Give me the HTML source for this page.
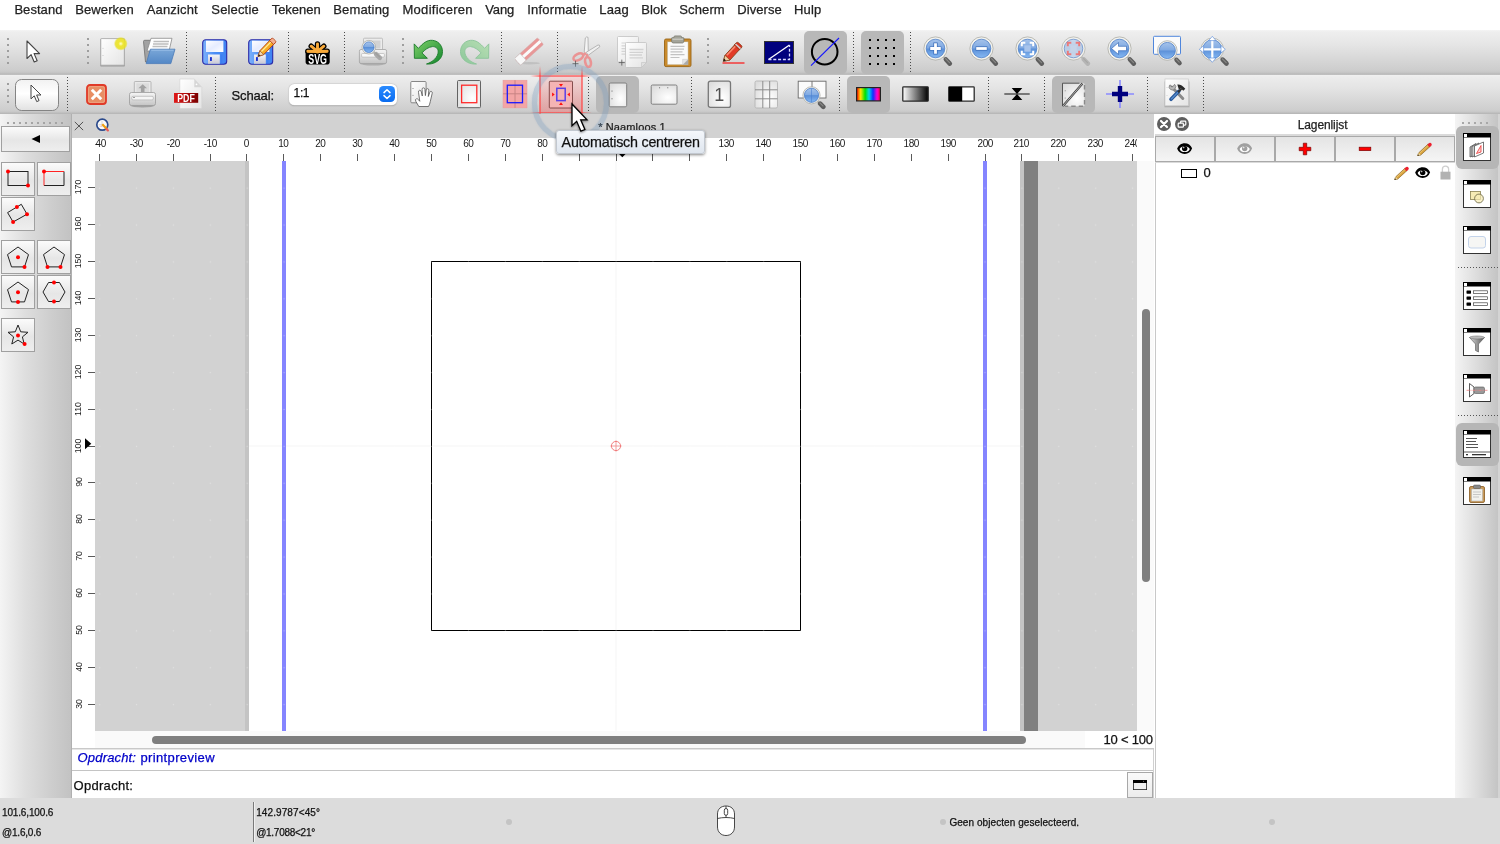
<!DOCTYPE html>
<html lang="nl">
<head>
<meta charset="utf-8">
<title>Naamloos 1 - QCAD</title>
<style>
*{box-sizing:border-box;margin:0;padding:0}
html,body{width:1500px;height:844px;overflow:hidden;background:#fff}
body{position:relative;font-family:"Liberation Sans",sans-serif;font-size:13px;color:#000;-webkit-text-stroke:0.250px currentColor}
#app{position:absolute;left:0;top:0;width:1500px;height:844px;overflow:hidden;will-change:transform}
#app div,#app span,#app svg{position:absolute}
#menubar{left:0;top:0;width:1500px;height:30px;background:#fff}
#tb1{left:0;top:30px;width:1500px;height:45px;background:linear-gradient(#f4f4f4 0,#eeeeee 2px,#e6e6e6 14px,#cdcdcd 40px,#c8c8c8 42px,#b9b9b9 44px,#c4c4c4 45px)}
#tb2{left:0;top:75px;width:1500px;height:39px;background:linear-gradient(#f0f0f0 0,#ececec 2px,#e4e4e4 13px,#cecece 35px,#c9c9c9 36.500px,#b8b8b8 38.500px,#b8b8b8 39px)}
.vsep{width:0;border-left:1px dotted #444}
.hsep{height:0;border-top:1px dotted #444}
.pressed{background:#b8b8b8;border-radius:5px}
#left{left:0;top:114px;width:72px;height:684px;background:linear-gradient(90deg,#f4f4f4,#dedede 35%,#cecece 70%,#c2c2c2)}
.tbtn{width:34px;height:34px;border:1px solid #a0a0a0;background:linear-gradient(#fbfbfb,#e6e6e6 55%,#eeeeee)}
#tabbar{left:72px;top:114px;width:1082px;height:24px;background:#d2d2d2}
#hruler{left:72px;top:138px;width:1082px;height:23px;background:#fff}
#hrclip{left:23px;top:0;width:1042px;height:23px;overflow:hidden}
#vruler{left:72px;top:161px;width:23px;height:588px;background:#fff;overflow:hidden}
#canvas{left:95px;top:161px;width:1042px;height:570px;background:#d2d2d2;overflow:hidden}
#vscroll{left:1137px;top:161px;width:17px;height:570px;background:#fafafa}
#hscroll{left:95px;top:731px;width:990px;height:17px;background:#fafafa}
#status{left:0;top:797.500px;width:1500px;height:46.500px;background:#dcdcdc}
#right{left:1154px;top:114px;width:301px;height:684px;background:#fff}
#rtb{left:1455px;top:114px;width:45px;height:684px;background:linear-gradient(90deg,#f4f4f4,#dedede 45%,#c2c2c2)}
.lbtn{top:23px;width:60px;height:26px;border:1px solid #a6a6a6;background:linear-gradient(#fafafa,#e8e8e8 50%,#f0f0f0)}
.rl{font-size:10px;line-height:12px;color:#1a1a1a;white-space:nowrap;-webkit-text-stroke:0}
</style>
</head>
<body>
<div id="app">
<div id="menubar">
<span style="left:14.4px;top:1.3px;font-size:13px;line-height:17px;letter-spacing:0.05px;color:#222;white-space:nowrap;">Bestand</span>
<span style="left:75.3px;top:1.3px;font-size:13px;line-height:17px;letter-spacing:0.08px;color:#222;white-space:nowrap;">Bewerken</span>
<span style="left:146.7px;top:1.3px;font-size:13px;line-height:17px;letter-spacing:0.16px;color:#222;white-space:nowrap;">Aanzicht</span>
<span style="left:211.3px;top:1.3px;font-size:13px;line-height:17px;letter-spacing:0.16px;color:#222;white-space:nowrap;">Selectie</span>
<span style="left:271.7px;top:1.3px;font-size:13px;line-height:17px;letter-spacing:-0.03px;color:#222;white-space:nowrap;">Tekenen</span>
<span style="left:333.3px;top:1.3px;font-size:13px;line-height:17px;letter-spacing:0.15px;color:#222;white-space:nowrap;">Bemating</span>
<span style="left:402.5px;top:1.3px;font-size:13px;line-height:17px;letter-spacing:0.28px;color:#222;white-space:nowrap;">Modificeren</span>
<span style="left:485.3px;top:1.3px;font-size:13px;line-height:17px;letter-spacing:-0.13px;color:#222;white-space:nowrap;">Vang</span>
<span style="left:527.3px;top:1.3px;font-size:13px;line-height:17px;letter-spacing:0.18px;color:#222;white-space:nowrap;">Informatie</span>
<span style="left:599.3px;top:1.3px;font-size:13px;line-height:17px;letter-spacing:0.16px;color:#222;white-space:nowrap;">Laag</span>
<span style="left:641.3px;top:1.3px;font-size:13px;line-height:17px;letter-spacing:0.04px;color:#222;white-space:nowrap;">Blok</span>
<span style="left:679.3px;top:1.3px;font-size:13px;line-height:17px;letter-spacing:0.12px;color:#222;white-space:nowrap;">Scherm</span>
<span style="left:737.3px;top:1.3px;font-size:13px;line-height:17px;letter-spacing:0.06px;color:#222;white-space:nowrap;">Diverse</span>
<span style="left:794.0px;top:1.3px;font-size:13px;line-height:17px;letter-spacing:0.19px;color:#222;white-space:nowrap;">Hulp</span>
</div>
<svg width="0" height="0" style="left:0;top:0"><defs>
<linearGradient id="gLens" x1="0" y1="0" x2="0" y2="1"><stop offset="0" stop-color="#a6c3ea"/><stop offset="0.480" stop-color="#7fa9e2"/><stop offset="0.520" stop-color="#5b90d8"/><stop offset="1" stop-color="#86b9f3"/></linearGradient>
<linearGradient id="gLensD" x1="0" y1="0" x2="0" y2="1"><stop offset="0" stop-color="#c4d6ee"/><stop offset="0.500" stop-color="#b4c9e6"/><stop offset="1" stop-color="#c9daf0"/></linearGradient>
<linearGradient id="gPaper" x1="0" y1="0" x2="1" y2="1"><stop offset="0" stop-color="#ffffff"/><stop offset="1" stop-color="#e4e4e4"/></linearGradient>
<radialGradient id="gPage" cx="0.650" cy="0.650" r="0.800"><stop offset="0" stop-color="#ffffff"/><stop offset="1" stop-color="#dcdcdc"/></radialGradient>
<radialGradient id="gGlow" cx="0.500" cy="0.500" r="0.500"><stop offset="0" stop-color="#ffffd0"/><stop offset="0.350" stop-color="#efe632"/><stop offset="0.750" stop-color="#e8e020" stop-opacity="0.850"/><stop offset="1" stop-color="#e8e020" stop-opacity="0"/></radialGradient>
<linearGradient id="gBlueF" x1="0" y1="0" x2="0" y2="1"><stop offset="0" stop-color="#7aa7d8"/><stop offset="1" stop-color="#5488c6"/></linearGradient>
<linearGradient id="gDisk" x1="0" y1="0" x2="1" y2="0"><stop offset="0" stop-color="#7eb2fb"/><stop offset="0.500" stop-color="#4a8df6"/><stop offset="1" stop-color="#3f83f2"/></linearGradient>
<linearGradient id="gLabel" x1="0" y1="0" x2="1" y2="1"><stop offset="0" stop-color="#ffffff"/><stop offset="0.500" stop-color="#e6ecff"/><stop offset="1" stop-color="#ffffff"/></linearGradient>
<linearGradient id="gMetal" x1="0" y1="0" x2="0" y2="1"><stop offset="0" stop-color="#f4f4f8"/><stop offset="1" stop-color="#c8c8d4"/></linearGradient>
<linearGradient id="gGreen" x1="0" y1="0" x2="1" y2="1"><stop offset="0" stop-color="#7fd06a"/><stop offset="1" stop-color="#12862c"/></linearGradient>
<linearGradient id="gGreenD" x1="0" y1="0" x2="1" y2="1"><stop offset="0" stop-color="#b9dfb4"/><stop offset="1" stop-color="#8cc79a"/></linearGradient>
<linearGradient id="gPrn" x1="0" y1="0" x2="0" y2="1"><stop offset="0" stop-color="#f6f6f6"/><stop offset="1" stop-color="#c4c4c4"/></linearGradient>
<linearGradient id="gRain" x1="0" y1="0" x2="1" y2="0"><stop offset="0" stop-color="#ff0000"/><stop offset="0.170" stop-color="#ffe600"/><stop offset="0.360" stop-color="#00e000"/><stop offset="0.520" stop-color="#00d8e8"/><stop offset="0.690" stop-color="#1030ff"/><stop offset="0.860" stop-color="#ff00d0"/><stop offset="1" stop-color="#ff0030"/></linearGradient>
<linearGradient id="gGray" x1="0" y1="0" x2="1" y2="0"><stop offset="0" stop-color="#ffffff"/><stop offset="1" stop-color="#000000"/></linearGradient>
<linearGradient id="gPdf" x1="0" y1="0" x2="1" y2="0"><stop offset="0" stop-color="#e01818"/><stop offset="1" stop-color="#7a0000"/></linearGradient>
<linearGradient id="gPencil" x1="0" y1="0" x2="1" y2="1"><stop offset="0" stop-color="#ffd23a"/><stop offset="1" stop-color="#f08a10"/></linearGradient>
</defs></svg>
<div id="tb1"></div><div id="tb2"></div>
<div style="left:7px;top:38px;width:2px;height:2px;background:#9e9e9e"></div><div style="left:7px;top:44px;width:2px;height:2px;background:#9e9e9e"></div><div style="left:7px;top:50px;width:2px;height:2px;background:#9e9e9e"></div><div style="left:7px;top:56px;width:2px;height:2px;background:#9e9e9e"></div><div style="left:7px;top:62px;width:2px;height:2px;background:#9e9e9e"></div>
<div style="left:87px;top:38px;width:2px;height:2px;background:#9e9e9e"></div><div style="left:87px;top:44px;width:2px;height:2px;background:#9e9e9e"></div><div style="left:87px;top:50px;width:2px;height:2px;background:#9e9e9e"></div><div style="left:87px;top:56px;width:2px;height:2px;background:#9e9e9e"></div><div style="left:87px;top:62px;width:2px;height:2px;background:#9e9e9e"></div>
<div style="left:402px;top:38px;width:2px;height:2px;background:#9e9e9e"></div><div style="left:402px;top:44px;width:2px;height:2px;background:#9e9e9e"></div><div style="left:402px;top:50px;width:2px;height:2px;background:#9e9e9e"></div><div style="left:402px;top:56px;width:2px;height:2px;background:#9e9e9e"></div><div style="left:402px;top:62px;width:2px;height:2px;background:#9e9e9e"></div>
<div style="left:707px;top:38px;width:2px;height:2px;background:#9e9e9e"></div><div style="left:707px;top:44px;width:2px;height:2px;background:#9e9e9e"></div><div style="left:707px;top:50px;width:2px;height:2px;background:#9e9e9e"></div><div style="left:707px;top:56px;width:2px;height:2px;background:#9e9e9e"></div><div style="left:707px;top:62px;width:2px;height:2px;background:#9e9e9e"></div>
<div style="left:186.0px;top:32px;width:1px;height:41px;background:repeating-linear-gradient(#4a4a4a 0,#4a4a4a 1px,transparent 1px,transparent 3px)"></div>
<div style="left:288.0px;top:32px;width:1px;height:41px;background:repeating-linear-gradient(#4a4a4a 0,#4a4a4a 1px,transparent 1px,transparent 3px)"></div>
<div style="left:344.0px;top:32px;width:1px;height:41px;background:repeating-linear-gradient(#4a4a4a 0,#4a4a4a 1px,transparent 1px,transparent 3px)"></div>
<div style="left:501.0px;top:32px;width:1px;height:41px;background:repeating-linear-gradient(#4a4a4a 0,#4a4a4a 1px,transparent 1px,transparent 3px)"></div>
<div style="left:557.0px;top:32px;width:1px;height:41px;background:repeating-linear-gradient(#4a4a4a 0,#4a4a4a 1px,transparent 1px,transparent 3px)"></div>
<div style="left:853.0px;top:32px;width:1px;height:41px;background:repeating-linear-gradient(#4a4a4a 0,#4a4a4a 1px,transparent 1px,transparent 3px)"></div>
<div style="left:910.0px;top:32px;width:1px;height:41px;background:repeating-linear-gradient(#4a4a4a 0,#4a4a4a 1px,transparent 1px,transparent 3px)"></div>
<div class="pressed" style="left:804px;top:31px;width:43px;height:43px"></div>
<div class="pressed" style="left:861px;top:31px;width:43px;height:43px"></div>
<svg style="left:26.0px;top:40.3px;" width="16.84" height="25.32" viewBox="0 0 16.84 25.32"><path transform="translate(1,1) scale(1.06)" d="M0 0V16.500L3.900 12.900L6.800 19.800L9.600 18.600L6.700 11.900H11.900Z" fill="#fff" stroke="#444" stroke-width="1.03774" stroke-linejoin="round"/></svg>
<svg style="left:98.0px;top:36.0px;" width="30" height="33" viewBox="0 0 30 33"><rect x="2.300" y="2.400" width="24.500" height="28.200" rx="1.200" fill="#9a9a9a"/><rect x="2.800" y="2.600" width="23.500" height="26.600" rx="0.800" fill="url(#gPaper)" stroke="#a8a8a8" stroke-width="0.800"/><circle cx="5" cy="12.300" r="0.500" fill="#bbb"/><circle cx="5" cy="19.600" r="0.500" fill="#bbb"/><circle cx="22.800" cy="7.700" r="7" fill="url(#gGlow)"/></svg>
<svg style="left:141.0px;top:36.0px;" width="36" height="30" viewBox="0 0 36 30"><path d="M2.500 5.500Q2.500 4.300 3.700 4.300H9.500L11 6H24V26H4.500Z" fill="#a2a2a2" stroke="#6e6e6e" stroke-width="0.800"/><path d="M10 2.300H31L28 15H6Z" fill="#fff" stroke="#8a8a8a" stroke-width="0.800"/><path d="M12.500 5.500H28M12 8H27.500M11.500 10.500H26.500" stroke="#bdbdbd" stroke-width="1.600"/><path d="M9.400 13.200H34L29.800 27.600H5.200Z" fill="url(#gBlueF)" stroke="#4a7ab8" stroke-width="0.800"/><path d="M10.300 14.300H32.500" stroke="#9cc0e8" stroke-width="0.800"/></svg>
<svg style="left:201.5px;top:38.7px;" width="26" height="26.5" viewBox="0 0 26 26.5"><rect x="0.700" y="0.700" width="24" height="24.600" rx="3" fill="url(#gDisk)" stroke="#2a2aa8" stroke-width="1.100"/><rect x="4" y="1.700" width="17.400" height="11.300" fill="url(#gLabel)"/><rect x="6" y="15.500" width="11.800" height="9.300" fill="url(#gMetal)"/><rect x="8" y="18" width="1.900" height="4" rx="0.500" fill="#1a2fd0"/><rect x="18.800" y="15.500" width="1.400" height="9" fill="#3a78ee" opacity="0.600"/></svg>
<svg style="left:247.5px;top:38.7px;" width="26" height="26.5" viewBox="0 0 26 26.5"><rect x="0.700" y="0.700" width="24" height="24.600" rx="3" fill="url(#gDisk)" stroke="#2a2aa8" stroke-width="1.100"/><rect x="4" y="1.700" width="17.400" height="11.300" fill="url(#gLabel)"/><rect x="6" y="15.500" width="11.800" height="9.300" fill="url(#gMetal)"/><rect x="8" y="18" width="1.900" height="4" rx="0.500" fill="#1a2fd0"/><rect x="18.800" y="15.500" width="1.400" height="9" fill="#3a78ee" opacity="0.600"/></svg>
<svg style="left:257.2px;top:37.2px;" width="20" height="21" viewBox="0 0 20 21"><path d="M1 19.500L2.800 13.800L14.300 1.800L18.300 5.700L6.700 17.600Z" fill="url(#gPencil)" stroke="#b03a10" stroke-width="0.900" stroke-linejoin="round"/><path d="M4.500 14.500L15 3.800" stroke="#fff3a8" stroke-width="1.200" opacity="0.900"/><path d="M12.600 3.600L14.400 1.700Q15.300 0.800 16.300 1.700L18.400 3.700Q19.300 4.600 18.400 5.600L16.600 7.400Z" fill="#f4b090" stroke="#b03a10" stroke-width="0.800"/><path d="M1 19.500L2.800 13.800L6.700 17.600Z" fill="#f2d8b0" stroke="#8a4a20" stroke-width="0.600"/><path d="M1 19.500L1.800 17L3.500 18.700Z" fill="#222"/></svg>
<svg style="left:304.5px;top:39.5px;" width="25" height="25" viewBox="0 0 25 25"><path d="M12.500 11.500L12.5 3.9" stroke="#000" stroke-width="5.400" stroke-linecap="round"/><path d="M12.500 11.500L6.2 6.2" stroke="#000" stroke-width="5.400" stroke-linecap="round"/><path d="M12.500 11.500L18.8 6.2" stroke="#000" stroke-width="5.400" stroke-linecap="round"/><path d="M12.500 11.500L2.8 11.3" stroke="#000" stroke-width="5.400" stroke-linecap="round"/><path d="M12.500 11.500L22.2 11.3" stroke="#000" stroke-width="5.400" stroke-linecap="round"/><rect x="0.600" y="9.300" width="24.100" height="15.200" rx="2.800" fill="#000"/><path d="M12.500 11.500L12.5 3.9" stroke="#f9aa3a" stroke-width="2.900" stroke-linecap="round"/><path d="M12.500 11.500L6.2 6.2" stroke="#f9aa3a" stroke-width="2.900" stroke-linecap="round"/><path d="M12.500 11.500L18.8 6.2" stroke="#f9aa3a" stroke-width="2.900" stroke-linecap="round"/><path d="M12.500 11.500L2.8 11.3" stroke="#f9aa3a" stroke-width="2.900" stroke-linecap="round"/><path d="M12.500 11.500L22.2 11.3" stroke="#f9aa3a" stroke-width="2.900" stroke-linecap="round"/><rect x="2" y="10.600" width="21" height="1.900" rx="0.900" fill="#f9aa3a"/><circle cx="12.500" cy="10.800" r="2.600" fill="#f9aa3a"/><text x="12.650" y="23.700" style="font-family:'Liberation Sans',sans-serif" font-weight="bold" font-size="14.200" fill="#fff" text-anchor="middle" textLength="18.800" lengthAdjust="spacingAndGlyphs">SVG</text></svg>
<svg style="left:358.0px;top:36.0px;" width="31" height="31" viewBox="0 0 31 31"><ellipse cx="15" cy="27.500" rx="13" ry="2" fill="#8a8a8a" opacity="0.500"/><rect x="5.500" y="2.200" width="19" height="13" rx="1" fill="#ececec" stroke="#b4b4b4" stroke-width="0.800"/><rect x="13" y="4.500" width="9.500" height="8" fill="#d2d2d2"/><path d="M3 13.500H27Q28.600 13.500 28.600 15.200V26Q28.600 27.500 27 27.500H3Q1.400 27.500 1.400 26V15.200Q1.400 13.500 3 13.500Z" fill="url(#gPrn)" stroke="#a2a2a2" stroke-width="0.800"/><rect x="3.600" y="17.500" width="22.800" height="3.600" rx="1" fill="#f8f8f8" stroke="#b0b0b0" stroke-width="0.600"/><path d="M16.1 16.3L18.2 18.3" stroke="#b4b4b0" stroke-width="2.200" stroke-linecap="round"/><path d="M18.2 18.3L21.8 21.8" stroke="#a8a8a8" stroke-width="4.600" stroke-linecap="round"/><path d="M17.9 17.4L21.5 20.9" stroke="#9a9a96" stroke-width="1.200" stroke-linecap="round" opacity="0.700"/><circle cx="10.8" cy="11.2" r="6.8" fill="#f4f4f0" stroke="#a4a49c" stroke-width="0.700"/><circle cx="10.8" cy="11.2" r="5.3" fill="url(#gLens)" stroke="#3f74c4" stroke-width="0.700"/></svg>
<svg style="left:412.5px;top:38.5px;" width="31" height="27" viewBox="0 0 31 27"><path d="M1.200 4.900L1.400 19.300L14.400 19.300L9 13.900C12 10.500 15.500 8 19.500 7.600C23 7.400 25.400 9.800 25.200 13C25 18 20 23 13.500 25C20 25.600 26 22.500 28.500 17.500C30.300 13.500 29.800 8 26.100 4.300C22.500 0.800 16.500 0.300 12.300 3.100C9.800 4.700 7.500 7 5.400 9.400Z" fill="url(#gGreen)" stroke="#1b7a2a" stroke-width="0.900" stroke-linejoin="round"/></svg>
<svg style="left:458.5px;top:38.5px;" width="31" height="27" viewBox="0 0 31 27"><g transform="translate(31,0) scale(-1,1)"><path d="M1.200 4.900L1.400 19.300L14.400 19.300L9 13.900C12 10.500 15.500 8 19.500 7.600C23 7.400 25.400 9.800 25.200 13C25 18 20 23 13.500 25C20 25.600 26 22.500 28.500 17.500C30.300 13.500 29.800 8 26.100 4.300C22.500 0.800 16.500 0.300 12.300 3.100C9.800 4.700 7.500 7 5.400 9.400Z" fill="url(#gGreenD)" stroke="#8cc49a" stroke-width="0.900" stroke-linejoin="round"/></g></svg>
<svg style="left:515.0px;top:37.0px;" width="30" height="29" viewBox="0 0 30 29"><ellipse cx="14" cy="26.200" rx="11" ry="1.200" fill="#b0b0b0" opacity="0.550"/><g transform="rotate(-42 14 14.500)"><rect x="-1.500" y="10" width="31" height="9" rx="1.200" fill="#e89898" stroke="#d4a8a8" stroke-width="0.500"/><rect x="-1.500" y="13" width="31" height="3" fill="#fafafa"/><rect x="-1.500" y="10" width="7.500" height="9" rx="0.800" fill="#f8f8f8" stroke="#c4c4c4" stroke-width="0.600"/></g></svg>
<svg style="left:570.0px;top:35.0px;" width="32" height="33" viewBox="0 0 32 33"><path d="M14.200 17.500L15.300 3Q16.300 1.300 18 2.300L18.300 17.500L16.300 19.500Z" fill="#f4f4f4" stroke="#a8a8a8" stroke-width="0.800"/><path d="M16.200 17.300L28 10Q30 9.500 29.800 11.800L18.200 20.300Z" fill="#f0f0f0" stroke="#a8a8a8" stroke-width="0.800"/><g fill="none" stroke="#ea9494" stroke-width="2.600"><ellipse cx="8.300" cy="22" rx="5.300" ry="3" transform="rotate(-28 8.300 22)"/><ellipse cx="18" cy="27" rx="2.800" ry="5" transform="rotate(-12 18 27)"/></g><path d="M12.500 20.500L16 18M17 19V22.500" stroke="#ea9494" stroke-width="2.400"/><path d="M2.500 28.700H8.500M5.500 25.700V31.700" stroke="#555" stroke-width="0.800"/></svg>
<svg style="left:616.0px;top:35.0px;" width="33" height="34" viewBox="0 0 33 34"><path d="M2.5 1.5H21.5Q22.5 1.5 22.5 2.5V22L17.5 27H2.5Q1.5 27 1.5 26V2.5Q1.5 1.5 2.5 1.5Z" fill="url(#gPaper)" stroke="#c2c2c2" stroke-width="0.800"/><path d="M22.5 22L17.5 27L17.5 22Z" fill="#e0e0e0" stroke="#c2c2c2" stroke-width="0.600"/><path d="M5.500 8H10M5.500 10.800H10M5.500 13.600H10M5.500 16.400H10M5.500 19.200H10" stroke="#d4d4d4" stroke-width="1.200"/><path d="M10.5 7.5H29.5Q30.5 7.5 30.5 8.5V27.5L25.5 32.5H10.5Q9.5 32.5 9.5 31.5V8.5Q9.5 7.5 10.5 7.5Z" fill="url(#gPaper)" stroke="#c2c2c2" stroke-width="0.800"/><path d="M30.5 27.5L25.5 32.5L25.5 27.5Z" fill="#e0e0e0" stroke="#c2c2c2" stroke-width="0.600"/><path d="M13.500 14.500H27.500M13.500 17.300H27M13.500 20H26M13.500 22.800H27" stroke="#d2d2d2" stroke-width="1.300"/><path d="M2.800 27.600H8.800M5.800 24.600V30.600" stroke="#555" stroke-width="0.800"/></svg>
<svg style="left:663.0px;top:35.0px;" width="30" height="33" viewBox="0 0 30 33"><rect x="1.500" y="4" width="26.500" height="27.600" rx="1.500" fill="#c98a2c" stroke="#9a6414" stroke-width="0.900"/><rect x="4.300" y="6.800" width="20.800" height="23" fill="#fafafa" stroke="#b8a070" stroke-width="0.500"/><path d="M7.500 11.300H21.500M7.500 14.100H21M7.500 16.900H19.500M7.500 19.700H21.500M7.500 22.500H16.500" stroke="#c2c2c2" stroke-width="1.200"/><path d="M25.100 24.300L19.600 29.800H25.100Z" fill="#aaa"/><path d="M19.600 24.300H25.100L19.600 29.800Z" fill="#e6e6e6" stroke="#bbb" stroke-width="0.400"/><path d="M8.500 5V3.600Q8.500 2.600 9.600 2.600H11V1.800Q11 0.900 12 0.900H17.500Q18.500 0.900 18.500 1.800V2.600H20Q21 2.600 21 3.600V5Q21 8 19.500 8H10Q8.500 8 8.500 5Z" fill="#a4a49a" stroke="#76766c" stroke-width="0.700"/><rect x="9.500" y="3.600" width="10.500" height="1.300" fill="#c8c8c0"/></svg>
<svg style="left:720.5px;top:39.5px;" width="26" height="26" viewBox="0 0 26 26"><path d="M1.500 23H23.500" stroke="#f00" stroke-width="1.100"/><path d="M2.300 21.300L4 15.300L15.300 3L20.300 7.600L9 20Z" fill="#e23a26" stroke="#7a3a10" stroke-width="0.800" stroke-linejoin="round"/><path d="M5.800 15.300L16 4.500" stroke="#f88a70" stroke-width="1.600"/><path d="M13.300 5L15.300 2.800Q16.300 1.800 17.500 2.800L20.500 5.500Q21.500 6.500 20.500 7.600L18.500 9.800Z" fill="#d83020" stroke="#7a3a10" stroke-width="0.700"/><path d="M14.500 4L19.500 8.600" stroke="#d0d0d0" stroke-width="1.500"/><path d="M2.300 21.300L4 15.300L9 20Z" fill="#f0d0a0" stroke="#7a3a10" stroke-width="0.600"/><path d="M2.300 21.300L3.100 18.600L5 20.400Z" fill="#111"/></svg>
<svg style="left:764.0px;top:41.0px;" width="30" height="23" viewBox="0 0 30 23"><rect x="0.500" y="0.500" width="29" height="22" fill="#00007e" stroke="#333" stroke-width="1"/><path d="M4.500 18.500L25.500 4" stroke="#fff" stroke-width="1.300"/><path d="M4.500 18.500H25.500V4" fill="none" stroke="#d8d8ff" stroke-width="1.300" stroke-dasharray="3 1.800"/></svg>
<svg style="left:809.0px;top:36.0px;" width="32" height="32" viewBox="0 0 32 32"><circle cx="15.700" cy="15.700" r="12.800" fill="none" stroke="#000" stroke-width="2"/><path d="M2 29.600L30 2" stroke="#1414ff" stroke-width="1.100"/></svg>
<svg style="left:869.2px;top:39.2px;" width="26" height="26" viewBox="0 0 26 26"><rect x="0" y="0" width="2" height="2" fill="#000"/><rect x="0" y="8" width="2" height="2" fill="#000"/><rect x="0" y="16" width="2" height="2" fill="#000"/><rect x="0" y="24" width="2" height="2" fill="#000"/><rect x="8" y="0" width="2" height="2" fill="#000"/><rect x="8" y="8" width="2" height="2" fill="#000"/><rect x="8" y="16" width="2" height="2" fill="#000"/><rect x="8" y="24" width="2" height="2" fill="#000"/><rect x="16" y="0" width="2" height="2" fill="#000"/><rect x="16" y="8" width="2" height="2" fill="#000"/><rect x="16" y="16" width="2" height="2" fill="#000"/><rect x="16" y="24" width="2" height="2" fill="#000"/><rect x="24" y="0" width="2" height="2" fill="#000"/><rect x="24" y="8" width="2" height="2" fill="#000"/><rect x="24" y="16" width="2" height="2" fill="#000"/><rect x="24" y="24" width="2" height="2" fill="#000"/></svg>
<svg style="left:921.5px;top:34.5px;" width="32" height="33" viewBox="0 0 32 33"><path d="M21.8 22.3L23.9 24.5" stroke="#b4b4b0" stroke-width="2.200" stroke-linecap="round"/><path d="M23.9 24.5L27.8 28.6" stroke="#5e5e5e" stroke-width="4.600" stroke-linecap="round"/><path d="M23.6 23.6L27.5 27.7" stroke="#9a9a96" stroke-width="1.200" stroke-linecap="round" opacity="0.700"/><circle cx="13.5" cy="13.5" r="11.6" fill="#f3f3ee" stroke="#a4a49c" stroke-width="0.700"/><circle cx="13.5" cy="13.5" r="9.3" fill="url(#gLens)" stroke="#3f74c4" stroke-width="0.700"/><path d="M7.600 13.500H19.400M13.500 7.600V19.400" stroke="#3a6cb8" stroke-width="4.200"/><path d="M8.200 13.500H18.800M13.500 8.200V18.800" stroke="#fff" stroke-width="2.800"/></svg>
<svg style="left:967.5px;top:34.5px;" width="32" height="33" viewBox="0 0 32 33"><path d="M21.8 22.3L23.9 24.5" stroke="#b4b4b0" stroke-width="2.200" stroke-linecap="round"/><path d="M23.9 24.5L27.8 28.6" stroke="#5e5e5e" stroke-width="4.600" stroke-linecap="round"/><path d="M23.6 23.6L27.5 27.7" stroke="#9a9a96" stroke-width="1.200" stroke-linecap="round" opacity="0.700"/><circle cx="13.5" cy="13.5" r="11.6" fill="#f3f3ee" stroke="#a4a49c" stroke-width="0.700"/><circle cx="13.5" cy="13.5" r="9.3" fill="url(#gLens)" stroke="#3f74c4" stroke-width="0.700"/><path d="M7.600 13.500H19.400" stroke="#3a6cb8" stroke-width="4.200"/><path d="M8.200 13.500H18.800" stroke="#fff" stroke-width="2.800"/></svg>
<svg style="left:1013.5px;top:34.5px;" width="32" height="33" viewBox="0 0 32 33"><path d="M21.8 22.3L23.9 24.5" stroke="#b4b4b0" stroke-width="2.200" stroke-linecap="round"/><path d="M23.9 24.5L27.8 28.6" stroke="#5e5e5e" stroke-width="4.600" stroke-linecap="round"/><path d="M23.6 23.6L27.5 27.7" stroke="#9a9a96" stroke-width="1.200" stroke-linecap="round" opacity="0.700"/><circle cx="13.5" cy="13.5" r="11.6" fill="#f3f3ee" stroke="#a4a49c" stroke-width="0.700"/><circle cx="13.5" cy="13.5" r="9.3" fill="url(#gLens)" stroke="#3f74c4" stroke-width="0.700"/><rect x="10.300" y="10.300" width="6.400" height="6.400" fill="#a8c4ec"/><path d="M7.800 11.300V7.800H11.300M15.700 7.800H19.200V11.300M19.200 15.700V19.200H15.700M11.300 19.200H7.800V15.700" fill="none" stroke="#fff" stroke-width="2"/></svg>
<svg style="left:1059.5px;top:34.5px;" width="32" height="33" viewBox="0 0 32 33"><g opacity="0.850"><path d="M21.8 22.3L23.9 24.5" stroke="#b4b4b0" stroke-width="2.200" stroke-linecap="round"/><path d="M23.9 24.5L27.8 28.6" stroke="#b0b0b0" stroke-width="4.600" stroke-linecap="round"/><path d="M23.6 23.6L27.5 27.7" stroke="#9a9a96" stroke-width="1.200" stroke-linecap="round" opacity="0.700"/><circle cx="13.5" cy="13.5" r="11.6" fill="#f3f3ee" stroke="#a4a49c" stroke-width="0.700"/><circle cx="13.5" cy="13.5" r="9.3" fill="url(#gLensD)" stroke="#3f74c4" stroke-width="0.700"/><rect x="10.300" y="10.300" width="6.400" height="6.400" fill="#c2d2ea"/><path d="M7.800 11.300V7.800H11.300M15.700 7.800H19.200V11.300M19.200 15.700V19.200H15.700M11.300 19.200H7.800V15.700" fill="none" stroke="#ee6868" stroke-width="2"/></g></svg>
<svg style="left:1105.5px;top:34.5px;" width="32" height="33" viewBox="0 0 32 33"><path d="M21.8 22.3L23.9 24.5" stroke="#b4b4b0" stroke-width="2.200" stroke-linecap="round"/><path d="M23.9 24.5L27.8 28.6" stroke="#5e5e5e" stroke-width="4.600" stroke-linecap="round"/><path d="M23.6 23.6L27.5 27.7" stroke="#9a9a96" stroke-width="1.200" stroke-linecap="round" opacity="0.700"/><circle cx="13.5" cy="13.5" r="11.6" fill="#f3f3ee" stroke="#a4a49c" stroke-width="0.700"/><circle cx="13.5" cy="13.5" r="9.3" fill="url(#gLens)" stroke="#3f74c4" stroke-width="0.700"/><path d="M5.500 13.500L12.500 7.500V11.300H20.500V15.700H12.500V19.500Z" fill="#fff" stroke="#3a6cb8" stroke-width="0.700"/></svg>
<svg style="left:1152.0px;top:35.0px;" width="32" height="33" viewBox="0 0 32 33"><rect x="1.500" y="1.300" width="27" height="18" rx="1" fill="#fbfbfb" stroke="#4f86dc" stroke-width="1"/><path d="M22.5 22.9L24.6 25.0" stroke="#b4b4b0" stroke-width="2.200" stroke-linecap="round"/><path d="M24.6 25.0L27.5 28.0" stroke="#5e5e5e" stroke-width="4.600" stroke-linecap="round"/><path d="M24.3 24.1L27.2 27.1" stroke="#9a9a96" stroke-width="1.200" stroke-linecap="round" opacity="0.700"/><circle cx="15.3" cy="15.5" r="9.8" fill="#f3f3ee" stroke="#a4a49c" stroke-width="0.700"/><circle cx="15.3" cy="15.5" r="8.1" fill="url(#gLens)" stroke="#3f74c4" stroke-width="0.700"/></svg>
<svg style="left:1197.0px;top:34.0px;" width="36" height="35" viewBox="0 0 36 35"><path d="M23.6 23.6L25.7 25.7" stroke="#b4b4b0" stroke-width="2.200" stroke-linecap="round"/><path d="M25.7 25.7L29.5 29.5" stroke="#5e5e5e" stroke-width="4.600" stroke-linecap="round"/><path d="M25.4 24.8L29.2 28.6" stroke="#9a9a96" stroke-width="1.200" stroke-linecap="round" opacity="0.700"/><circle cx="15.3" cy="15.3" r="11.2" fill="#f3f3ee" stroke="#a4a49c" stroke-width="0.700"/><circle cx="15.3" cy="15.3" r="9.5" fill="url(#gLens)" stroke="#3f74c4" stroke-width="0.700"/><path d="M15.300 4V26.600M4 15.300H26.600" stroke="#fff" stroke-width="2.200"/><path d="M15.300 2.300L19 6.600H11.600Z M15.300 28.300L19 24H11.600Z M2.300 15.300L6.600 11.600V19Z M28.300 15.300L24 11.600V19Z" fill="#fff" stroke="#4f86dc" stroke-width="0.600"/></svg>
<div style="left:7px;top:83px;width:2px;height:2px;background:#9e9e9e"></div><div style="left:7px;top:89px;width:2px;height:2px;background:#9e9e9e"></div><div style="left:7px;top:95px;width:2px;height:2px;background:#9e9e9e"></div><div style="left:7px;top:101px;width:2px;height:2px;background:#9e9e9e"></div>
<div style="left:67.0px;top:77px;width:1px;height:35px;background:repeating-linear-gradient(#4a4a4a 0,#4a4a4a 1px,transparent 1px,transparent 3px)"></div>
<div style="left:215.0px;top:77px;width:1px;height:35px;background:repeating-linear-gradient(#4a4a4a 0,#4a4a4a 1px,transparent 1px,transparent 3px)"></div>
<div style="left:588.0px;top:77px;width:1px;height:35px;background:repeating-linear-gradient(#4a4a4a 0,#4a4a4a 1px,transparent 1px,transparent 3px)"></div>
<div style="left:691.0px;top:77px;width:1px;height:35px;background:repeating-linear-gradient(#4a4a4a 0,#4a4a4a 1px,transparent 1px,transparent 3px)"></div>
<div style="left:839.0px;top:77px;width:1px;height:35px;background:repeating-linear-gradient(#4a4a4a 0,#4a4a4a 1px,transparent 1px,transparent 3px)"></div>
<div style="left:988.0px;top:77px;width:1px;height:35px;background:repeating-linear-gradient(#4a4a4a 0,#4a4a4a 1px,transparent 1px,transparent 3px)"></div>
<div style="left:1044.0px;top:77px;width:1px;height:35px;background:repeating-linear-gradient(#4a4a4a 0,#4a4a4a 1px,transparent 1px,transparent 3px)"></div>
<div style="left:1147.0px;top:77px;width:1px;height:35px;background:repeating-linear-gradient(#4a4a4a 0,#4a4a4a 1px,transparent 1px,transparent 3px)"></div>
<div style="left:1203.0px;top:77px;width:1px;height:35px;background:repeating-linear-gradient(#4a4a4a 0,#4a4a4a 1px,transparent 1px,transparent 3px)"></div>
<div style="left:14.500px;top:78.500px;width:44px;height:32px;border:1.600px solid #848484;border-radius:6.500px;background:linear-gradient(#f2f2f2,#ffffff 45%,#e2e2e2)"></div>
<svg style="left:30.0px;top:84.2px;" width="13.76" height="20.48" viewBox="0 0 13.76 20.48"><path transform="translate(1,1) scale(0.84)" d="M0 0V16.500L3.900 12.900L6.800 19.800L9.600 18.600L6.700 11.900H11.900Z" fill="#fff" stroke="#444" stroke-width="1.19048" stroke-linejoin="round"/></svg>
<svg style="left:85.5px;top:83.5px;" width="21" height="21" viewBox="0 0 21 21"><rect x="1" y="1" width="19" height="19" rx="3" fill="#e88e64" stroke="#e03a28" stroke-width="1.800"/><rect x="2.600" y="2.600" width="15.800" height="15.800" rx="1.500" fill="none" stroke="#f0a888" stroke-width="0.800"/><path d="M5.800 5.800L15.200 15.200M15.200 5.800L5.800 15.200" stroke="#fff" stroke-width="3"/></svg>
<svg style="left:128.0px;top:79.5px;" width="29" height="28" viewBox="0 0 29 28"><ellipse cx="14.500" cy="25.800" rx="12" ry="1.600" fill="#808080" opacity="0.600"/><rect x="6.300" y="1.500" width="16.700" height="13" rx="0.800" fill="#e9e9e9" stroke="#ababab" stroke-width="0.800"/><rect x="8.300" y="3.300" width="12.700" height="9.500" fill="#dcdcdc"/><path d="M14.700 4.300L19 8.300H16.500V12H12.900V8.300H10.400Z" fill="#a2a2a2"/><path d="M3.500 12.500H25.500Q27.500 12.500 27.500 14.500V23.500Q27.500 25.500 25.500 25.500H3.500Q1.500 25.500 1.500 23.500V14.500Q1.500 12.500 3.500 12.500Z" fill="url(#gPrn)" stroke="#9a9a9a" stroke-width="0.800"/><rect x="3.800" y="16.300" width="21.500" height="3.600" rx="1.200" fill="#f6f6f6" stroke="#a6a6a6" stroke-width="0.600"/><rect x="5" y="17" width="2" height="0.800" fill="#888"/></svg>
<svg style="left:173.0px;top:78.0px;" width="30" height="32" viewBox="0 0 30 32"><path d="M6.800 1H21.300L28.800 9.300V30.600H6.800Z" fill="url(#gPaper)" stroke="#d0d0d0" stroke-width="0.600"/><path d="M21.300 1L28.800 9.300H21.300Z" fill="#d6d6d6"/><circle cx="23.500" cy="6.300" r="0.900" fill="#fff"/><rect x="1" y="15" width="24.200" height="9.800" fill="url(#gPdf)"/><text x="13" y="23.700" style="font-family:'Liberation Sans',sans-serif" font-weight="bold" font-size="10.300" fill="#fff" text-anchor="middle" textLength="17.600" lengthAdjust="spacingAndGlyphs">PDF</text></svg>
<span style="left:231.6px;top:86.5px;font-size:13px;line-height:17px;letter-spacing:-0.16px;color:#111;white-space:nowrap;">Schaal:</span>
<div style="left:288.500px;top:83.500px;width:108.500px;height:21px;border-radius:5.500px;background:#fff;box-shadow:0 0 0 0.500px #d0d0d0,0 0.500px 1.500px rgba(0,0,0,0.250)"></div>
<div style="left:379px;top:86px;width:16px;height:16px;border-radius:4.500px;background:linear-gradient(#2a8bff,#0a6cf0)"></div>
<svg style="left:379.0px;top:86.0px;" width="16" height="16" viewBox="0 0 16 16"><path d="M5 6.600L8 3.700L11 6.600M5 9.600L8 12.500L11 9.600" fill="none" stroke="#fff" stroke-width="1.500" stroke-linecap="round" stroke-linejoin="round"/></svg>
<span style="left:293.6px;top:85.0px;font-size:12px;line-height:17px;letter-spacing:-0.39px;color:#111;white-space:nowrap;">1:1</span>
<svg style="left:409.0px;top:80.0px;" width="28" height="28" viewBox="0 0 28 28"><rect x="1.800" y="1.500" width="15.300" height="21.300" rx="1" fill="url(#gPaper)" stroke="#7a7a7a" stroke-width="0.900"/><circle cx="4" cy="8.500" r="0.500" fill="#666"/><circle cx="4" cy="15.300" r="0.500" fill="#666"/><path d="M9.800 26.500L6.800 21.300Q5.800 19.300 7.300 18.800Q8.600 18.500 9.600 19.800L10.800 21.300L9.500 12.300Q9.300 10.500 10.600 10.300Q11.900 10.200 12.300 11.800L13.300 16L13.100 9.300Q13.100 7.800 14.400 7.800Q15.700 7.800 15.900 9.300L16.400 15.600L17.200 9.800Q17.500 8.500 18.700 8.700Q19.900 8.900 19.800 10.300L19.300 16.500L20.800 12.300Q21.300 11 22.400 11.400Q23.500 11.800 23.200 13.300L21.300 21.500Q20.800 24.500 19.500 26.500Z" fill="#fff" stroke="#555" stroke-width="0.800" stroke-linejoin="round"/></svg>
<svg style="left:456.0px;top:79.0px;" width="26" height="30" viewBox="0 0 26 30"><rect x="1.500" y="1.500" width="23" height="27.200" rx="1" fill="url(#gPage)" stroke="#555" stroke-width="0.900"/><rect x="5.600" y="6.200" width="15.200" height="17.500" fill="none" stroke="#ff2a2a" stroke-width="1.300"/></svg>
<svg style="left:502.0px;top:79.0px;" width="26" height="30" viewBox="0 0 26 30"><rect x="1" y="1.200" width="24" height="27.700" fill="#f3a5a5" stroke="#e89a9a" stroke-width="0.500"/><path d="M13 1.200V28.900M1 14.800H25" stroke="#c88484" stroke-width="1"/><rect x="5.300" y="6.200" width="15.200" height="17.500" fill="none" stroke="#1a1aff" stroke-width="1.300"/></svg>
<div style="left:540px;top:76px;width:42px;height:36.500px;background:linear-gradient(rgba(255,120,120,0.180),rgba(255,90,90,0.380))"></div>
<div style="left:539.300px;top:66px;width:1.500px;height:55px;background:linear-gradient(rgba(255,60,60,0),rgba(255,70,70,0.620) 18%,rgba(255,70,70,0.620) 82%,rgba(255,60,60,0))"></div>
<div style="left:581.300px;top:66px;width:1.500px;height:55px;background:linear-gradient(rgba(255,60,60,0),rgba(255,70,70,0.620) 18%,rgba(255,70,70,0.620) 82%,rgba(255,60,60,0))"></div>
<div style="left:530px;top:75.400px;width:62px;height:1.500px;background:linear-gradient(90deg,rgba(255,60,60,0),rgba(255,70,70,0.620) 16%,rgba(255,70,70,0.620) 84%,rgba(255,60,60,0))"></div>
<div style="left:530px;top:111.600px;width:62px;height:1.500px;background:linear-gradient(90deg,rgba(255,60,60,0),rgba(255,70,70,0.620) 16%,rgba(255,70,70,0.620) 84%,rgba(255,60,60,0))"></div>
<svg style="left:548.0px;top:79.5px;" width="26" height="29" viewBox="0 0 26 29"><rect x="1.300" y="1.200" width="23.200" height="26.800" rx="0.800" fill="#f4b4b4" stroke="#6a3030" stroke-width="0.800"/><rect x="8.800" y="8.300" width="8.400" height="12.300" fill="none" stroke="#5a40e8" stroke-width="1.500"/><path d="M11 4.100H15L13 6.700Z M11 24.900H15L13 22.300Z M4.100 12.500V16.500L6.700 14.500Z M21.900 12.500V16.500L19.300 14.500Z" fill="#ff1010"/></svg>
<div class="pressed" style="left:596px;top:76px;width:43px;height:37px"></div>
<svg style="left:607.5px;top:81.5px;" width="20" height="26" viewBox="0 0 20 26"><rect x="1.200" y="1" width="17.500" height="23.800" rx="1.500" fill="url(#gPage)" stroke="#777" stroke-width="0.900"/><circle cx="4" cy="9" r="0.550" fill="#555"/><circle cx="4" cy="16.800" r="0.550" fill="#555"/></svg>
<svg style="left:650.0px;top:83.5px;" width="28" height="21" viewBox="0 0 28 21"><rect x="1.200" y="1" width="25.800" height="19.200" rx="1.300" fill="url(#gPage)" stroke="#777" stroke-width="0.900"/><circle cx="9.600" cy="3.800" r="0.550" fill="#555"/><circle cx="17.800" cy="3.800" r="0.550" fill="#555"/></svg>
<svg style="left:707.0px;top:80.0px;" width="25" height="29" viewBox="0 0 25 29"><rect x="1.300" y="1.200" width="22.200" height="26.200" rx="2" fill="url(#gPage)" stroke="#777" stroke-width="1.300"/><text x="12.300" y="20.800" style="font-family:'Liberation Sans',sans-serif" font-size="18" fill="#505050" text-anchor="middle">1</text></svg>
<svg style="left:753.5px;top:79.5px;" width="25" height="29" viewBox="0 0 25 29"><rect x="1" y="1" width="22.500" height="27" rx="1.500" fill="url(#gPage)" stroke="#b4b4b4" stroke-width="0.900"/><path d="M8.800 1V28M15.700 1V28M1 9.800H23.500M1 18.800H23.500" stroke="#8c8c8c" stroke-width="1"/></svg>
<svg style="left:797.0px;top:79.5px;" width="31" height="30" viewBox="0 0 31 30"><rect x="1.200" y="1.200" width="27.800" height="16.800" fill="#fbfbfb" stroke="#6a6a6a" stroke-width="0.900"/><path d="M15 1.200V18" stroke="#6a6a6a" stroke-width="0.900"/><path d="M21.0 21.7L23.2 23.7" stroke="#b4b4b0" stroke-width="2.200" stroke-linecap="round"/><path d="M23.2 23.7L26.3 26.8" stroke="#5e5e5e" stroke-width="4.600" stroke-linecap="round"/><path d="M22.9 22.8L26.0 25.9" stroke="#9a9a96" stroke-width="1.200" stroke-linecap="round" opacity="0.700"/><circle cx="14.5" cy="15.3" r="8.6" fill="#f3f3ee" stroke="#a4a49c" stroke-width="0.700"/><circle cx="14.5" cy="15.3" r="7.1" fill="url(#gLens)" stroke="#3f74c4" stroke-width="0.700"/><path d="M14.500 8.300V22.300" stroke="#4a80d0" stroke-width="0.600"/></svg>
<div class="pressed" style="left:847px;top:76px;width:43px;height:37px"></div>
<svg style="left:856.0px;top:87.0px;" width="25" height="14.5" viewBox="0 0 25 14.5"><rect x="0.600" y="0.600" width="23.800" height="13.300" fill="url(#gRain)" stroke="#222" stroke-width="1.200"/></svg>
<svg style="left:901.5px;top:85.8px;" width="27" height="16" viewBox="0 0 27 16"><rect x="0.800" y="0.800" width="25.400" height="14.400" rx="0.800" fill="url(#gGray)" stroke="#2a2a2a" stroke-width="1.300"/></svg>
<svg style="left:947.5px;top:85.8px;" width="27" height="16" viewBox="0 0 27 16"><rect x="0.800" y="0.800" width="25.400" height="14.400" rx="0.800" fill="#fff" stroke="#2a2a2a" stroke-width="1.300"/><rect x="0.800" y="0.800" width="13.400" height="14.400" fill="#000"/></svg>
<svg style="left:1004.0px;top:87.0px;" width="26" height="14" viewBox="0 0 26 14"><path d="M0.300 7H25.700" stroke="#555" stroke-width="1.500"/><path d="M7.700 1H18.300L13 7Z M7.700 13H18.300L13 7Z" fill="#000"/></svg>
<div class="pressed" style="left:1052px;top:76px;width:43px;height:37px"></div>
<svg style="left:1061.0px;top:82.0px;" width="25" height="26" viewBox="0 0 25 26"><rect x="1.500" y="1.200" width="22" height="23" rx="1" fill="url(#gPage)"/><path d="M1.500 24.200V1.200H18.500" fill="none" stroke="#555" stroke-width="1"/><path d="M23.500 3V24.200H4" fill="none" stroke="#8a8a8a" stroke-width="1.400" stroke-dasharray="4.500 3"/><path d="M2 24L21.500 1.500" stroke="#3a3a3a" stroke-width="2.100"/><path d="M2 24L21.500 1.500" stroke="#e8e8e8" stroke-width="0.700"/><circle cx="4.200" cy="8.800" r="0.500" fill="#777"/><circle cx="4.200" cy="16" r="0.500" fill="#777"/></svg>
<svg style="left:1105.0px;top:79.0px;" width="30" height="30" viewBox="0 0 30 30"><path d="M15 1V29M1 15H29" stroke="#8a8aff" stroke-width="1.600"/><path d="M15 7V23M7 15H23" stroke="#00007e" stroke-width="4.400"/></svg>
<svg style="left:1162.5px;top:78.0px;" width="28" height="31" viewBox="0 0 28 31"><rect x="1.500" y="3.500" width="25" height="25.800" fill="#8a8a8a" opacity="0.500"/><rect x="2" y="1" width="23.600" height="26.800" fill="url(#gPaper)" stroke="#c4c4c4" stroke-width="0.600"/><circle cx="4" cy="9.500" r="0.400" fill="#aaa"/><circle cx="4" cy="17.500" r="0.400" fill="#aaa"/><path d="M8.800 9L19.800 20.500" stroke="#8a8a8a" stroke-width="3" stroke-linecap="round"/><path d="M6.500 7.200A3.300 3.300 0 1 0 11.600 6.300L9.600 8.800L8 8.600L7.700 7Z" fill="#b8b8b8" stroke="#666" stroke-width="0.600"/><path d="M15.800 13.300L8 21.300" stroke="#2a5a9c" stroke-width="3.600" stroke-linecap="round"/><path d="M15.300 13.800L8.500 20.800" stroke="#5a90d0" stroke-width="1.200" stroke-linecap="round"/><path d="M14.300 6.600Q18.300 6 22.300 10.800L20.300 12.800L17.800 10.300L16 12Z" fill="#2a2a2a"/><path d="M18.600 10.600L15 14.300" stroke="#333" stroke-width="2"/></svg>
<div id="left">
<div style="left:71px;top:0;width:1px;height:685px;background:#b0b0b0"></div>
<div style="left:7px;top:8px;width:2px;height:2px;background:#a4a4a4"></div>
<div style="left:13px;top:8px;width:2px;height:2px;background:#a4a4a4"></div>
<div style="left:19px;top:8px;width:2px;height:2px;background:#a4a4a4"></div>
<div style="left:25px;top:8px;width:2px;height:2px;background:#a4a4a4"></div>
<div style="left:31px;top:8px;width:2px;height:2px;background:#a4a4a4"></div>
<div style="left:37px;top:8px;width:2px;height:2px;background:#a4a4a4"></div>
<div style="left:43px;top:8px;width:2px;height:2px;background:#a4a4a4"></div>
<div style="left:49px;top:8px;width:2px;height:2px;background:#a4a4a4"></div>
<div style="left:55px;top:8px;width:2px;height:2px;background:#a4a4a4"></div>
<div style="left:61px;top:8px;width:2px;height:2px;background:#a4a4a4"></div>
<div class="tbtn" style="left:1.300px;top:12.300px;width:69.200px;height:25.500px"></div>
<svg style="left:30px;top:20px" width="12" height="10" viewBox="0 0 12 10"><path d="M1.500 5L10 1V9Z" fill="#000"/></svg>
<div class="tbtn" style="left:1.3px;top:48.3px"></div>
<svg style="left:1.3px;top:48.3px" width="34" height="34" viewBox="0 0 34 34"><rect x="7" y="9.500" width="20" height="14" fill="none" stroke="#222" stroke-width="1"/><circle cx="7.0" cy="9.5" r="2.0" fill="#f00"/><circle cx="27.0" cy="23.5" r="2.0" fill="#f00"/></svg>
<div class="tbtn" style="left:36.5px;top:48.3px"></div>
<svg style="left:36.5px;top:48.3px" width="34" height="34" viewBox="0 0 34 34"><path d="M7 23.500H27V9.500" fill="none" stroke="#222" stroke-width="1"/><path d="M7 23.500V9.500H27" fill="none" stroke="#f22" stroke-width="1"/><circle cx="7.0" cy="9.5" r="2.0" fill="#f00"/></svg>
<div class="tbtn" style="left:1.3px;top:83.3px"></div>
<svg style="left:1.3px;top:83.3px" width="34" height="34" viewBox="0 0 34 34"><path d="M6.6 15.6L20.3 7.3L26.0 17.2L12.1 25.0Z" fill="none" stroke="#222" stroke-width="1" /><circle cx="15.9" cy="10.0" r="2.0" fill="#f00"/><circle cx="26.0" cy="17.2" r="2.0" fill="#f00"/><circle cx="12.1" cy="25.0" r="2.0" fill="#f00"/></svg>
<div class="tbtn" style="left:1.3px;top:126.3px"></div>
<svg style="left:1.3px;top:126.3px" width="34" height="34" viewBox="0 0 34 34"><path d="M17.0 7.0L27.5 14.6L23.5 26.9L10.5 26.9L6.5 14.6Z" fill="none" stroke="#222" stroke-width="1" /><circle cx="17.0" cy="17.2" r="2.0" fill="#f00"/><circle cx="23.5" cy="26.9" r="2.0" fill="#f00"/></svg>
<div class="tbtn" style="left:36.5px;top:126.3px"></div>
<svg style="left:36.5px;top:126.3px" width="34" height="34" viewBox="0 0 34 34"><path d="M17.0 7.0L27.5 14.6L23.5 26.9L10.5 26.9L6.5 14.6Z" fill="none" stroke="#222" stroke-width="1" /><circle cx="23.5" cy="26.9" r="2.0" fill="#f00"/><circle cx="10.5" cy="26.9" r="2.0" fill="#f00"/></svg>
<div class="tbtn" style="left:1.3px;top:161.3px"></div>
<svg style="left:1.3px;top:161.3px" width="34" height="34" viewBox="0 0 34 34"><path d="M17.0 7.0L27.5 14.6L23.5 26.9L10.5 26.9L6.5 14.6Z" fill="none" stroke="#222" stroke-width="1" /><circle cx="17.0" cy="17.2" r="2.0" fill="#f00"/><circle cx="17.0" cy="26.9" r="2.0" fill="#f00"/></svg>
<div class="tbtn" style="left:36.5px;top:161.3px"></div>
<svg style="left:36.5px;top:161.3px" width="34" height="34" viewBox="0 0 34 34"><path d="M28.0 17.0L22.5 26.5L11.5 26.5L6.0 17.0L11.5 7.5L22.5 7.5Z" fill="none" stroke="#222" stroke-width="1" /><circle cx="17.0" cy="7.5" r="2.0" fill="#f00"/><circle cx="17.0" cy="26.5" r="2.0" fill="#f00"/></svg>
<div class="tbtn" style="left:1.3px;top:204.3px"></div>
<svg style="left:1.3px;top:204.3px" width="34" height="34" viewBox="0 0 34 34"><path d="M17.0 7.0L19.7 13.8L27.0 14.3L21.4 18.9L23.2 26.0L17.0 22.1L10.8 26.0L12.6 18.9L7.0 14.3L14.3 13.8Z" fill="none" stroke="#222" stroke-width="1" /><circle cx="17.0" cy="17.5" r="2.0" fill="#f00"/><circle cx="23.6" cy="26.0" r="2.0" fill="#f00"/></svg>
</div>
<div id="tabbar"></div>
<div id="hruler"><div id="hrclip">
<div style="left:4.0px;top:16px;width:1px;height:7px;background:#5a5a5a"></div>
<span class="rl" style="letter-spacing:-0.450px;left:-2.3px;top:0.1px">-40</span>
<div style="left:41.0px;top:16px;width:1px;height:7px;background:#5a5a5a"></div>
<span class="rl" style="letter-spacing:-0.450px;left:34.7px;top:0.1px">-30</span>
<div style="left:78.0px;top:16px;width:1px;height:7px;background:#5a5a5a"></div>
<span class="rl" style="letter-spacing:-0.450px;left:71.7px;top:0.1px">-20</span>
<div style="left:115.0px;top:16px;width:1px;height:7px;background:#5a5a5a"></div>
<span class="rl" style="letter-spacing:-0.450px;left:108.7px;top:0.1px">-10</span>
<div style="left:151.0px;top:16px;width:1px;height:7px;background:#5a5a5a"></div>
<span class="rl" style="letter-spacing:-0.450px;left:148.7px;top:0.1px">0</span>
<div style="left:188.0px;top:16px;width:1px;height:7px;background:#5a5a5a"></div>
<span class="rl" style="letter-spacing:-0.450px;left:183.2px;top:0.1px">10</span>
<div style="left:225.0px;top:16px;width:1px;height:7px;background:#5a5a5a"></div>
<span class="rl" style="letter-spacing:-0.450px;left:220.2px;top:0.1px">20</span>
<div style="left:262.0px;top:16px;width:1px;height:7px;background:#5a5a5a"></div>
<span class="rl" style="letter-spacing:-0.450px;left:257.2px;top:0.1px">30</span>
<div style="left:299.0px;top:16px;width:1px;height:7px;background:#5a5a5a"></div>
<span class="rl" style="letter-spacing:-0.450px;left:294.2px;top:0.1px">40</span>
<div style="left:336.0px;top:16px;width:1px;height:7px;background:#5a5a5a"></div>
<span class="rl" style="letter-spacing:-0.450px;left:331.2px;top:0.1px">50</span>
<div style="left:373.0px;top:16px;width:1px;height:7px;background:#5a5a5a"></div>
<span class="rl" style="letter-spacing:-0.450px;left:368.2px;top:0.1px">60</span>
<div style="left:410.0px;top:16px;width:1px;height:7px;background:#5a5a5a"></div>
<span class="rl" style="letter-spacing:-0.450px;left:405.2px;top:0.1px">70</span>
<div style="left:447.0px;top:16px;width:1px;height:7px;background:#5a5a5a"></div>
<span class="rl" style="letter-spacing:-0.450px;left:442.2px;top:0.1px">80</span>
<div style="left:484.0px;top:16px;width:1px;height:7px;background:#5a5a5a"></div>
<span class="rl" style="letter-spacing:-0.450px;left:479.2px;top:0.1px">90</span>
<div style="left:521.0px;top:16px;width:1px;height:7px;background:#5a5a5a"></div>
<span class="rl" style="letter-spacing:-0.450px;left:513.6px;top:0.1px">100</span>
<div style="left:557.0px;top:16px;width:1px;height:7px;background:#5a5a5a"></div>
<span class="rl" style="letter-spacing:-0.450px;left:550.0px;top:0.1px">110</span>
<div style="left:594.0px;top:16px;width:1px;height:7px;background:#5a5a5a"></div>
<span class="rl" style="letter-spacing:-0.450px;left:586.6px;top:0.1px">120</span>
<div style="left:631.0px;top:16px;width:1px;height:7px;background:#5a5a5a"></div>
<span class="rl" style="letter-spacing:-0.450px;left:623.6px;top:0.1px">130</span>
<div style="left:668.0px;top:16px;width:1px;height:7px;background:#5a5a5a"></div>
<span class="rl" style="letter-spacing:-0.450px;left:660.6px;top:0.1px">140</span>
<div style="left:705.0px;top:16px;width:1px;height:7px;background:#5a5a5a"></div>
<span class="rl" style="letter-spacing:-0.450px;left:697.6px;top:0.1px">150</span>
<div style="left:742.0px;top:16px;width:1px;height:7px;background:#5a5a5a"></div>
<span class="rl" style="letter-spacing:-0.450px;left:734.6px;top:0.1px">160</span>
<div style="left:779.0px;top:16px;width:1px;height:7px;background:#5a5a5a"></div>
<span class="rl" style="letter-spacing:-0.450px;left:771.6px;top:0.1px">170</span>
<div style="left:816.0px;top:16px;width:1px;height:7px;background:#5a5a5a"></div>
<span class="rl" style="letter-spacing:-0.450px;left:808.6px;top:0.1px">180</span>
<div style="left:853.0px;top:16px;width:1px;height:7px;background:#5a5a5a"></div>
<span class="rl" style="letter-spacing:-0.450px;left:845.6px;top:0.1px">190</span>
<div style="left:890.0px;top:16px;width:1px;height:7px;background:#5a5a5a"></div>
<span class="rl" style="letter-spacing:-0.450px;left:882.6px;top:0.1px">200</span>
<div style="left:926.0px;top:16px;width:1px;height:7px;background:#5a5a5a"></div>
<span class="rl" style="letter-spacing:-0.450px;left:918.6px;top:0.1px">210</span>
<div style="left:963.0px;top:16px;width:1px;height:7px;background:#5a5a5a"></div>
<span class="rl" style="letter-spacing:-0.450px;left:955.6px;top:0.1px">220</span>
<div style="left:1000.0px;top:16px;width:1px;height:7px;background:#5a5a5a"></div>
<span class="rl" style="letter-spacing:-0.450px;left:992.6px;top:0.1px">230</span>
<div style="left:1037.0px;top:16px;width:1px;height:7px;background:#5a5a5a"></div>
<span class="rl" style="letter-spacing:-0.450px;left:1029.6px;top:0.1px">240</span>
</div></div>
<div id="vruler">
<div style="left:16px;top:543.0px;width:7px;height:1px;background:#5a5a5a"></div>
<span class="rl" style="font-size:8.700px;left:1.5px;top:536.5px;width:9.7px;text-align:center;transform:rotate(-90deg);transform-origin:50% 50%">30</span>
<div style="left:16px;top:506.0px;width:7px;height:1px;background:#5a5a5a"></div>
<span class="rl" style="font-size:8.700px;left:1.5px;top:499.5px;width:9.7px;text-align:center;transform:rotate(-90deg);transform-origin:50% 50%">40</span>
<div style="left:16px;top:469.0px;width:7px;height:1px;background:#5a5a5a"></div>
<span class="rl" style="font-size:8.700px;left:1.5px;top:462.5px;width:9.7px;text-align:center;transform:rotate(-90deg);transform-origin:50% 50%">50</span>
<div style="left:16px;top:432.0px;width:7px;height:1px;background:#5a5a5a"></div>
<span class="rl" style="font-size:8.700px;left:1.5px;top:425.5px;width:9.7px;text-align:center;transform:rotate(-90deg);transform-origin:50% 50%">60</span>
<div style="left:16px;top:395.0px;width:7px;height:1px;background:#5a5a5a"></div>
<span class="rl" style="font-size:8.700px;left:1.5px;top:388.5px;width:9.7px;text-align:center;transform:rotate(-90deg);transform-origin:50% 50%">70</span>
<div style="left:16px;top:358.0px;width:7px;height:1px;background:#5a5a5a"></div>
<span class="rl" style="font-size:8.700px;left:1.5px;top:351.5px;width:9.7px;text-align:center;transform:rotate(-90deg);transform-origin:50% 50%">80</span>
<div style="left:16px;top:321.0px;width:7px;height:1px;background:#5a5a5a"></div>
<span class="rl" style="font-size:8.700px;left:1.5px;top:314.5px;width:9.7px;text-align:center;transform:rotate(-90deg);transform-origin:50% 50%">90</span>
<div style="left:16px;top:285.0px;width:7px;height:1px;background:#5a5a5a"></div>
<span class="rl" style="font-size:8.700px;left:-1.0px;top:278.5px;width:14.5px;text-align:center;transform:rotate(-90deg);transform-origin:50% 50%">100</span>
<div style="left:16px;top:248.0px;width:7px;height:1px;background:#5a5a5a"></div>
<span class="rl" style="font-size:8.700px;left:-0.6px;top:241.5px;width:13.9px;text-align:center;transform:rotate(-90deg);transform-origin:50% 50%">110</span>
<div style="left:16px;top:211.0px;width:7px;height:1px;background:#5a5a5a"></div>
<span class="rl" style="font-size:8.700px;left:-1.0px;top:204.5px;width:14.5px;text-align:center;transform:rotate(-90deg);transform-origin:50% 50%">120</span>
<div style="left:16px;top:174.0px;width:7px;height:1px;background:#5a5a5a"></div>
<span class="rl" style="font-size:8.700px;left:-1.0px;top:167.5px;width:14.5px;text-align:center;transform:rotate(-90deg);transform-origin:50% 50%">130</span>
<div style="left:16px;top:137.0px;width:7px;height:1px;background:#5a5a5a"></div>
<span class="rl" style="font-size:8.700px;left:-1.0px;top:130.5px;width:14.5px;text-align:center;transform:rotate(-90deg);transform-origin:50% 50%">140</span>
<div style="left:16px;top:100.0px;width:7px;height:1px;background:#5a5a5a"></div>
<span class="rl" style="font-size:8.700px;left:-1.0px;top:93.5px;width:14.5px;text-align:center;transform:rotate(-90deg);transform-origin:50% 50%">150</span>
<div style="left:16px;top:63.0px;width:7px;height:1px;background:#5a5a5a"></div>
<span class="rl" style="font-size:8.700px;left:-1.0px;top:56.5px;width:14.5px;text-align:center;transform:rotate(-90deg);transform-origin:50% 50%">160</span>
<div style="left:16px;top:26.0px;width:7px;height:1px;background:#5a5a5a"></div>
<span class="rl" style="font-size:8.700px;left:-1.0px;top:19.5px;width:14.5px;text-align:center;transform:rotate(-90deg);transform-origin:50% 50%">170</span>
<svg style="left:13px;top:277px" width="7" height="12" viewBox="0 0 7 12"><path d="M0 0.300L6.300 5.800L0 11.300Z" fill="#000"/></svg>
</div>
<div id="canvas">
<div style="left:150px;top:0;width:4px;height:570px;background:#c4c4c4"></div>
<div style="left:154px;top:0;width:771px;height:570px;background:#fff"></div>
<div style="left:925px;top:0;width:4px;height:570px;background:#c4c4c4"></div>
<div style="left:929px;top:0;width:14px;height:570px;background:#808080"></div>
<div style="left:154px;top:284px;width:771px;height:2px;background:#fafafa"></div>
<div style="left:520px;top:0;width:2px;height:570px;background:#fafafa"></div>
<div style="left:187px;top:0;width:4px;height:570px;background:#8585ff"></div>
<div style="left:888px;top:0;width:4px;height:570px;background:#8585ff"></div>
<div style="left:336px;top:100px;width:370px;height:370px;border:1px solid #000"></div>
<div style="left:0;top:0;width:1042px;height:570px;background-image:radial-gradient(circle,rgba(255,255,255,0.330) 0.550px,rgba(255,255,255,0) 1.050px);background-size:36.905px 36.905px;background-position:133.75px 266.95px"></div>
<svg style="left:511px;top:275px" width="20" height="20" viewBox="0 0 20 20"><g fill="none" stroke="#f07070" stroke-width="1" opacity="0.9"><circle cx="10" cy="10" r="4.600"/><path d="M4.400 10H15.600M10 4.400V15.600" opacity="0.700"/></g></svg>
</div>
<div id="vscroll"><div style="left:5px;top:148.200px;width:8px;height:273px;border-radius:4px;background:#7f7f7f"></div></div>
<div id="hscroll"><div style="left:57px;top:5px;width:874px;height:8px;border-radius:4px;background:#7f7f7f"></div></div>
<div style="left:1085px;top:731px;width:69px;height:17px;background:#fff"></div>
<span style="left:1103.5px;top:732.0px;font-size:13px;line-height:16px;letter-spacing:-0.21px;color:#111;white-space:nowrap;">10 &lt; 100</span>
<div style="left:72px;top:748px;width:1082px;height:50px;background:#fff"></div>
<div style="left:72px;top:748px;width:1082px;height:1px;background:#c9c9c9"></div>
<div style="left:72px;top:749px;width:1082px;height:1px;background:#e6e6e6"></div>
<div style="left:72px;top:770px;width:1082px;height:1px;background:#c4c4c4"></div>
<div style="left:1153px;top:749px;width:1px;height:49px;background:#d0d0d0"></div>
<span style="left:77.6px;top:749.2px;font-size:13px;line-height:17px;letter-spacing:0.16px;color:#0000c8;white-space:nowrap;font-style:italic;">Opdracht:</span>
<span style="left:140.5px;top:749.2px;font-size:13px;line-height:17px;letter-spacing:0.36px;color:#0000c8;white-space:nowrap;">printpreview</span>
<span style="left:73.5px;top:776.8px;font-size:13px;line-height:17px;letter-spacing:0.30px;color:#111;white-space:nowrap;">Opdracht:</span>
<div style="left:1127px;top:772px;width:26px;height:26px;border:1px solid #a8a8a8;background:linear-gradient(#fafafa,#ececec)"></div>
<svg style="left:1133px;top:780.200px" width="14" height="10" viewBox="0 0 14 10"><rect x="0.400" y="0.400" width="13.200" height="9.200" fill="#efefef" stroke="#222" stroke-width="0.800"/><rect x="0" y="0" width="14" height="3" fill="#000"/><rect x="10" y="0.900" width="0.900" height="0.900" fill="#888"/></svg>
<div id="right">
<div style="left:1px;top:21px;width:1px;height:663px;background:#c8c8c8"></div>
<svg style="left:3px;top:3px" width="34" height="14" viewBox="0 0 34 14"><circle cx="7" cy="7" r="7" fill="#5e5e5e"/><path d="M4 4L10 10M10 4L4 10" stroke="#fff" stroke-width="2.200" stroke-linecap="round"/><circle cx="25" cy="7" r="7" fill="#5e5e5e"/><rect x="23.600" y="4.100" width="5.200" height="4" rx="0.800" fill="none" stroke="#fff" stroke-width="1.200"/><rect x="21.200" y="6.200" width="5.200" height="4" rx="0.800" fill="#5e5e5e" stroke="#fff" stroke-width="1.200"/></svg>
<div style="left:1px;top:20px;width:301px;height:29px;background:#dadada"></div>
<div style="left:1px;top:22px;width:300.500px;height:26px;background:#a9a9a9"></div>
<div style="left:2px;top:23px;width:58px;height:24px;background:linear-gradient(#e4e4e4,#f5f5f5)"></div>
<div style="left:62px;top:23px;width:58px;height:24px;background:linear-gradient(#e4e4e4,#f5f5f5)"></div>
<div style="left:122px;top:23px;width:58px;height:24px;background:linear-gradient(#e4e4e4,#f5f5f5)"></div>
<div style="left:182px;top:23px;width:58px;height:24px;background:linear-gradient(#e4e4e4,#f5f5f5)"></div>
<div style="left:242px;top:23px;width:58px;height:24px;background:linear-gradient(#e4e4e4,#f5f5f5)"></div>
</div>
<svg style="left:1177.4px;top:143.0px" width="15.500" height="11" viewBox="0 0 15.500 11"><path d="M0.200 5.700C1.300 2.300 4.200 0.200 7.700 0.200C11 0.200 13.800 2 15.100 5.300C13.900 8.900 11.100 10.900 7.700 10.900C4.200 10.900 1.400 9 0.200 5.700Z" fill="#000"/><path d="M2.600 5.900C3.600 4.100 5.400 3.200 7.700 3.200C10 3.200 11.800 4.100 12.800 5.900C11.900 8 10.100 9.100 7.700 9.100C5.300 9.100 3.500 8 2.600 5.900Z" fill="#fff"/><circle cx="7.700" cy="5.600" r="2.700" fill="#000"/><circle cx="6.700" cy="4.600" r="0.800" fill="#fff" opacity="0.750"/></svg>
<svg style="left:1237.4px;top:143.0px" width="15.500" height="11" viewBox="0 0 15.500 11"><path d="M0.200 5.700C1.300 2.300 4.200 0.200 7.700 0.200C11 0.200 13.800 2 15.100 5.300C13.900 8.900 11.100 10.900 7.700 10.900C4.200 10.900 1.400 9 0.200 5.700Z" fill="#a0a0a0"/><path d="M2.600 5.900C3.600 4.100 5.400 3.200 7.700 3.200C10 3.200 11.800 4.100 12.800 5.900C11.900 8 10.100 9.100 7.700 9.100C5.300 9.100 3.500 8 2.600 5.900Z" fill="#fff"/><circle cx="7.700" cy="5.600" r="2.700" fill="#a0a0a0"/><circle cx="6.700" cy="4.600" r="0.800" fill="#fff" opacity="0.750"/></svg>
<svg style="left:1298px;top:142px" width="14" height="14" viewBox="0 0 14 14"><path d="M5.300 1.200H8.700V5.300H12.800V8.700H8.700V12.800H5.300V8.700H1.200V5.300H5.300Z" fill="#f00" stroke="#7a0000" stroke-width="0.700"/></svg>
<svg style="left:1358px;top:146px" width="14" height="6" viewBox="0 0 14 6"><rect x="1.200" y="1.200" width="11.600" height="3.400" fill="#f00" stroke="#7a0000" stroke-width="0.700"/></svg>
<svg style="left:1417.3px;top:141.8px" width="15.500" height="14.500" viewBox="0 0 15.500 14.500"><path d="M0.500 13.800L1.600 10.900L11.300 1.900L13.400 4.200L3.700 13.100Z" fill="#d9a43e" stroke="#7a5210" stroke-width="0.600" stroke-linejoin="round"/><path d="M2.600 11.300L11.900 2.700" stroke="#f2cf7e" stroke-width="0.700" fill="none"/><path d="M10.300 2.800L12.200 1Q13.100 0.300 13.900 1.100L14.500 1.800Q15.200 2.700 14.400 3.500L12.500 5.200Z" fill="#ee2030"/><path d="M0.500 13.800L1.600 10.900L3.700 13.100Z" fill="#ecd9a6"/><path d="M0.500 13.800L1.100 12.200L2.200 13.400Z" fill="#2a1a05"/></svg>
<span style="left:1297.7px;top:117.1px;font-size:12px;line-height:16px;letter-spacing:-0.10px;color:#222;white-space:nowrap;">Lagenlijst</span>
<div style="left:1181px;top:169px;width:16px;height:9px;border:1px solid #000;background:#fff"></div>
<span style="left:1203.5px;top:165px;font-size:13px;line-height:16px;color:#111">0</span>
<svg style="left:1393.9px;top:165.9px" width="15.500" height="14.500" viewBox="0 0 15.500 14.500"><path d="M0.500 13.800L1.600 10.900L11.300 1.900L13.400 4.200L3.700 13.100Z" fill="#d9a43e" stroke="#7a5210" stroke-width="0.600" stroke-linejoin="round"/><path d="M2.600 11.300L11.900 2.700" stroke="#f2cf7e" stroke-width="0.700" fill="none"/><path d="M10.300 2.800L12.200 1Q13.100 0.300 13.900 1.100L14.500 1.800Q15.200 2.700 14.400 3.500L12.500 5.200Z" fill="#ee2030"/><path d="M0.500 13.800L1.600 10.900L3.700 13.100Z" fill="#ecd9a6"/><path d="M0.500 13.800L1.100 12.200L2.200 13.400Z" fill="#2a1a05"/></svg>
<svg style="left:1415.3px;top:167.1px" width="15.500" height="11" viewBox="0 0 15.500 11"><path d="M0.200 5.700C1.300 2.300 4.200 0.200 7.700 0.200C11 0.200 13.800 2 15.100 5.300C13.900 8.900 11.100 10.900 7.700 10.900C4.200 10.900 1.400 9 0.200 5.700Z" fill="#000"/><path d="M2.600 5.900C3.600 4.100 5.400 3.200 7.700 3.200C10 3.200 11.800 4.100 12.800 5.900C11.900 8 10.100 9.100 7.700 9.100C5.300 9.100 3.500 8 2.600 5.900Z" fill="#fff"/><circle cx="7.700" cy="5.600" r="2.700" fill="#000"/><circle cx="6.700" cy="4.600" r="0.800" fill="#fff" opacity="0.750"/></svg>
<svg style="left:1439.600px;top:165.300px" width="11" height="15" viewBox="0 0 11 15"><path d="M2.400 7.200V4.300A3.100 3.100 0 0 1 8.600 4.300V7.200" fill="none" stroke="#cfcfcf" stroke-width="1.300"/><rect x="0.500" y="6.700" width="10" height="7.800" fill="#b2b2b2"/></svg>
<div id="rtb">
<div style="left:43px;top:0;width:2px;height:684px;background:#d4d4d4"></div>
<div style="left:7px;top:8px;width:2px;height:2px;background:#a8a8a8"></div>
<div style="left:13px;top:8px;width:2px;height:2px;background:#a8a8a8"></div>
<div style="left:19px;top:8px;width:2px;height:2px;background:#a8a8a8"></div>
<div style="left:25px;top:8px;width:2px;height:2px;background:#a8a8a8"></div>
<div style="left:31px;top:8px;width:2px;height:2px;background:#a8a8a8"></div>
<div class="pressed" style="left:1.200px;top:12.300px;width:42.500px;height:42.500px;background:#b6b6b6;border-radius:6px"></div>
<div class="pressed" style="left:1.200px;top:309px;width:42.500px;height:42.500px;background:#b6b6b6;border-radius:6px"></div>
<div style="left:3px;top:153px;width:41px;height:1px;background:repeating-linear-gradient(90deg,#555 0,#555 1px,transparent 1px,transparent 3px)"></div>
<div style="left:3px;top:301px;width:41px;height:1px;background:repeating-linear-gradient(90deg,#555 0,#555 1px,transparent 1px,transparent 3px)"></div>
<svg style="left:8px;top:19px" width="28" height="28" viewBox="0 0 28 28"><rect x="0.500" y="0.500" width="27" height="27" fill="#fff" stroke="#333" stroke-width="1"/><rect x="0" y="0" width="28" height="4.500" fill="#000"/><rect x="1" y="1" width="3" height="3" fill="#fff"/><path d="M7 14L13 10.500V21.500L7 24Z" fill="#bbb" stroke="#555" stroke-width="0.800"/><path d="M9 13.500L16 10V21L9 24Z" fill="#ccc" stroke="#555" stroke-width="0.800"/><path d="M11.500 13L20.500 9V20L11.500 24Z" fill="#fff" stroke="#555" stroke-width="0.800"/><path d="M13.500 20.500L18 12.500V19Z" fill="#fbd5d5" stroke="#e33" stroke-width="0.800"/></svg>
<svg style="left:8px;top:66px" width="28" height="28" viewBox="0 0 28 28"><rect x="0.500" y="0.500" width="27" height="27" fill="#fff" stroke="#333" stroke-width="1"/><rect x="0" y="0" width="28" height="4.500" fill="#000"/><rect x="1" y="1" width="3" height="3" fill="#fff"/><rect x="7.500" y="11.500" width="10" height="8" fill="#f6ebb4" stroke="#8a8250" stroke-width="0.800"/><circle cx="16" cy="18.500" r="4.400" fill="#f6ebb4" fill-opacity="0.700" stroke="#6a6440" stroke-width="0.800"/></svg>
<svg style="left:8px;top:112px" width="28" height="28" viewBox="0 0 28 28"><rect x="0.500" y="0.500" width="27" height="27" fill="#fff" stroke="#333" stroke-width="1"/><rect x="0" y="0" width="28" height="4.500" fill="#000"/><rect x="1" y="1" width="3" height="3" fill="#fff"/><rect x="5.500" y="10.500" width="17" height="11.500" rx="2.500" fill="#f6f6f4" stroke="#c3d3ea" stroke-width="1"/></svg>
<svg style="left:8px;top:168px" width="28" height="28" viewBox="0 0 28 28"><rect x="0.500" y="0.500" width="27" height="27" fill="#fff" stroke="#333" stroke-width="1"/><rect x="0" y="0" width="28" height="4.500" fill="#000"/><rect x="1" y="1" width="3" height="3" fill="#fff"/><g fill="#000"><rect x="3.500" y="8.500" width="4.500" height="3.200" rx="0.600"/><rect x="3.500" y="14.500" width="4.500" height="3.200" rx="0.600"/><rect x="3.500" y="20.500" width="4.500" height="3.200" rx="0.600"/></g><g fill="#fff" stroke="#444" stroke-width="0.700"><rect x="10.500" y="8.800" width="14" height="2.800"/><rect x="10.500" y="14.800" width="14" height="2.800"/><rect x="10.500" y="20.800" width="14" height="2.800"/></g></svg>
<svg style="left:8px;top:214px" width="28" height="28" viewBox="0 0 28 28"><rect x="0.500" y="0.500" width="27" height="27" fill="#fff" stroke="#333" stroke-width="1"/><rect x="0" y="0" width="28" height="4.500" fill="#000"/><rect x="1" y="1" width="3" height="3" fill="#fff"/><defs><linearGradient id="fg" x1="0" x2="1"><stop offset="0" stop-color="#ddd"/><stop offset="0.500" stop-color="#999"/><stop offset="1" stop-color="#555"/></linearGradient></defs><path d="M6.500 9.500H21.500L15.500 16V24L12.500 22.500V16Z" fill="url(#fg)" stroke="#555" stroke-width="0.600"/><ellipse cx="14" cy="9.500" rx="7.500" ry="1.500" fill="#bbb" stroke="#666" stroke-width="0.500"/></svg>
<svg style="left:8px;top:260px" width="28" height="28" viewBox="0 0 28 28"><rect x="0.500" y="0.500" width="27" height="27" fill="#fff" stroke="#333" stroke-width="1"/><rect x="0" y="0" width="28" height="4.500" fill="#000"/><rect x="1" y="1" width="3" height="3" fill="#fff"/><path d="M6.500 9.500V23L11 19.500V13Z" fill="#fff" stroke="#333" stroke-width="0.800"/><rect x="11" y="13" width="10.500" height="6.500" rx="1.500" fill="#999" stroke="#555" stroke-width="0.600"/><path d="M3.500 16.300H24.500" stroke="#f08080" stroke-width="0.800" stroke-dasharray="3 1 1 1"/></svg>
<svg style="left:8px;top:316px" width="28" height="28" viewBox="0 0 28 28"><rect x="0.500" y="0.500" width="27" height="27" fill="#fff" stroke="#333" stroke-width="1"/><rect x="0" y="0" width="28" height="4.500" fill="#000"/><rect x="1" y="1" width="3" height="3" fill="#fff"/><g fill="#555"><rect x="3" y="8" width="11" height="1"/><rect x="3" y="11" width="10" height="1"/><rect x="3" y="14" width="12" height="1"/><rect x="3" y="17" width="12" height="1"/></g><path d="M0.500 22H27.500" stroke="#333" stroke-width="0.800"/><rect x="9" y="24" width="14" height="1.300" fill="#333"/><rect x="3" y="24" width="2" height="1.300" fill="#333"/></svg>
<svg style="left:8px;top:363px" width="28" height="28" viewBox="0 0 28 28"><rect x="0.500" y="0.500" width="27" height="27" fill="#fff" stroke="#333" stroke-width="1"/><rect x="0" y="0" width="28" height="4.500" fill="#000"/><rect x="1" y="1" width="3" height="3" fill="#fff"/><rect x="6.500" y="9.500" width="15" height="16" rx="1.500" fill="#c89a5a" stroke="#8a5a20" stroke-width="0.800"/><rect x="8.500" y="12" width="11" height="12" fill="#f2f2ee" stroke="#aaa" stroke-width="0.500"/><rect x="10.500" y="8" width="7" height="3.500" rx="1" fill="#888" stroke="#555" stroke-width="0.500"/><path d="M10 15H18M10 17.500H18M10 20H16" stroke="#bbb" stroke-width="0.800"/></svg>
</div>
<div id="status">
<div style="left:253px;top:4px;width:1px;height:40px;background:#7a7a7a"></div>
<div style="left:254px;top:4px;width:1px;height:40px;background:#f0f0f0"></div>
<div style="left:506.2px;top:21.700px;width:5.600px;height:5.600px;border-radius:3px;background:#c4c4c4"></div>
<div style="left:940.2px;top:21.700px;width:5.600px;height:5.600px;border-radius:3px;background:#c4c4c4"></div>
<div style="left:1269.2px;top:21.700px;width:5.600px;height:5.600px;border-radius:3px;background:#c4c4c4"></div>
<svg style="left:716px;top:7px" width="20" height="32" viewBox="0 0 20 32"><path d="M10 1C5 1 1.5 4 1.5 9V22C1.5 27 5 30.5 10 30.5S18.500 27 18.500 22V9C18.500 4 15 1 10 1Z" fill="#fff" stroke="#333" stroke-width="0.9"/><path d="M1.500 13.500C6 12.200 14 12.200 18.500 13.500" fill="none" stroke="#333" stroke-width="0.9"/><path d="M10 1.200V3.500M10 10V12.600" stroke="#333" stroke-width="0.9"/><rect x="8.300" y="3.500" width="3.400" height="6.800" rx="1.700" fill="#fff" stroke="#333" stroke-width="0.9"/></svg>
</div>
<span style="left:2.0px;top:806.0px;font-size:10px;line-height:13px;letter-spacing:-0.15px;color:#111;white-space:nowrap;">101.6,100.6</span>
<span style="left:2.0px;top:826.0px;font-size:10px;line-height:13px;letter-spacing:-0.20px;color:#111;white-space:nowrap;">@1.6,0.6</span>
<span style="left:256.2px;top:806.0px;font-size:10px;line-height:13px;letter-spacing:0.10px;color:#111;white-space:nowrap;">142.9787&lt;45°</span>
<span style="left:256.2px;top:826.0px;font-size:10px;line-height:13px;letter-spacing:-0.27px;color:#111;white-space:nowrap;">@1.7088&lt;21°</span>
<span style="left:949.4px;top:816.0px;font-size:10px;line-height:13px;letter-spacing:0.07px;color:#111;white-space:nowrap;">Geen objecten geselecteerd.</span>
<svg style="left:74.0px;top:121.0px;" width="10" height="10" viewBox="0 0 10 10"><path d="M0.800 0.900L9.100 9.100M9.100 0.900L0.800 9.100" stroke="#444" stroke-width="0.900"/></svg>
<svg style="left:95.0px;top:117.0px;" width="15" height="16" viewBox="0 0 15 16"><circle cx="7.300" cy="7.700" r="5.500" fill="#fafafa" stroke="#2c4a8c" stroke-width="1.700"/><path d="M3.500 7.700H9M7 4V10" stroke="#c8c8c8" stroke-width="0.700"/><path d="M4.500 9.300H7" stroke="#f0a0a0" stroke-width="0.600"/><path d="M7.300 7.300L12.300 12.600" stroke="#f2a010" stroke-width="2.200"/><path d="M11.600 12L12.900 13.400" stroke="#e85a5a" stroke-width="2.200" stroke-linecap="round"/></svg>
<span style="left:598.2px;top:119.5px;font-size:11px;line-height:14px;letter-spacing:0.12px;color:#222;white-space:nowrap;">* Naamloos 1</span>
<svg style="left:617.5px;top:153.0px;" width="9" height="5" viewBox="0 0 9 5"><path d="M0.300 0.300H8.300L4.300 4.300Z" fill="#000"/></svg>
<div style="left:531.800px;top:64.200px;width:77.600px;height:77.600px;border-radius:50%;border:5px solid rgba(110,150,190,0.300);box-shadow:0 0 1.500px rgba(96,140,184,0.350),inset 0 0 1.500px rgba(96,140,184,0.350)"></div>
<div style="left:556px;top:129.500px;width:149.200px;height:24px;border-radius:3px;background:linear-gradient(#f4f7fb,#dfe6ef);border:1px solid #c2c8d0;box-shadow:0 1px 3px rgba(0,0,0,0.480)"></div>
<span style="left:561.6px;top:134.1px;font-size:14.3px;line-height:17px;letter-spacing:-0.23px;color:#111;white-space:nowrap;">Automatisch centreren</span>
<svg style="left:567.6px;top:99.9px;" width="24" height="36" viewBox="0 0 24 36"><path d="M4 4V25.800L8.700 21.300L12.900 31.200L16.900 29.500L12.700 19.800H19Z" fill="#fff" stroke="#000" stroke-width="1.300" stroke-linejoin="miter" filter="drop-shadow(0 1px 1.200px rgba(0,0,0,0.450))"/></svg>
</div>
</body>
</html>
